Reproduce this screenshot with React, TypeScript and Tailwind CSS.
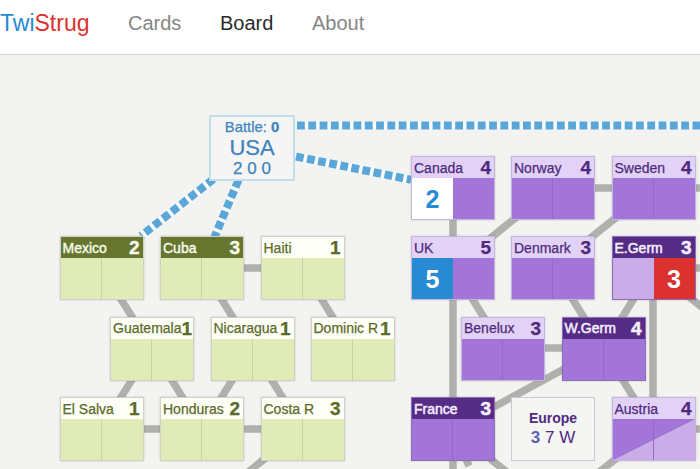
import React from "react";

type Theme = "camBattle" | "cam" | "eurBattle" | "eur";

interface Country {
  name: string;
  stability: number;
  x: number;
  y: number;
  theme: Theme;
  us?: number;
  usControl?: boolean;
  ussr?: number;
  cells?: "east" | "split";
}

const countries: Country[] = [
  { name: "Mexico", stability: 2, x: 59.5, y: 236, theme: "camBattle" },
  { name: "Cuba", stability: 3, x: 160, y: 236, theme: "camBattle" },
  { name: "Haiti", stability: 1, x: 260.5, y: 236, theme: "cam" },
  { name: "Guatemala", stability: 1, x: 110, y: 316.5, theme: "cam" },
  { name: "Nicaragua", stability: 1, x: 210.5, y: 316.5, theme: "cam" },
  { name: "Dominic R", stability: 1, x: 310.5, y: 316.5, theme: "cam" },
  { name: "El Salva", stability: 1, x: 59.5, y: 397, theme: "cam" },
  { name: "Honduras", stability: 2, x: 160, y: 397, theme: "cam" },
  { name: "Costa R", stability: 3, x: 260.5, y: 397, theme: "cam" },
  { name: "Canada", stability: 4, x: 411, y: 156, theme: "eur", us: 2 },
  { name: "Norway", stability: 4, x: 511, y: 156, theme: "eur" },
  { name: "Sweden", stability: 4, x: 611.5, y: 156, theme: "eur" },
  { name: "UK", stability: 5, x: 411, y: 236, theme: "eur", us: 5, usControl: true },
  { name: "Denmark", stability: 3, x: 511, y: 236, theme: "eur" },
  { name: "E.Germ", stability: 3, x: 611.5, y: 236, theme: "eurBattle", ussr: 3, cells: "east" },
  { name: "Benelux", stability: 3, x: 461, y: 316.5, theme: "eur" },
  { name: "W.Germ", stability: 4, x: 561.5, y: 316.5, theme: "eurBattle" },
  { name: "France", stability: 3, x: 411, y: 397, theme: "eurBattle" },
  { name: "Austria", stability: 4, x: 611.5, y: 397, theme: "eur", cells: "split" },
];

const header: Record<Theme, string> = {
  camBattle: "bg-[#67762f] text-[#f8faec] [-webkit-text-stroke:0.4px]",
  cam: "bg-[#fdfef5] text-[#5c6b2b] [-webkit-text-stroke:0.25px]",
  eurBattle: "bg-[#552d87] text-[#f5effc] [-webkit-text-stroke:0.5px]",
  eur: "bg-[#e2d3f6] text-[#4e2a80] [-webkit-text-stroke:0.25px]",
};

const links: [number, number, number, number][] = [
  [101, 268, 152, 348],
  [202, 268, 252, 348],
  [202, 268, 302, 268],
  [302, 268, 352, 348],
  [152, 348, 101, 429],
  [152, 348, 202, 429],
  [252, 348, 202, 429],
  [252, 348, 302, 429],
  [101, 429, 302, 429],
  [302, 429, 222, 493],
  [453, 188, 453, 480],
  [453, 429, 469, 466],
  [453, 429, 553, 509],
  [553, 188, 453, 268],
  [553, 188, 720, 188],
  [653, 188, 553, 268],
  [453, 268, 503, 348],
  [503, 348, 603, 348],
  [553, 268, 603, 348],
  [653, 268, 603, 348],
  [653, 268, 653, 429],
  [653, 268, 720, 268],
  [653, 268, 753, 348],
  [603, 348, 453, 429],
  [603, 348, 653, 429],
  [653, 429, 573, 493],
  [653, 429, 720, 429],
];

const usaLinks: [number, number, number, number][] = [
  [213.5, 179, 141, 236],
  [238.5, 180, 214.5, 237],
  [296, 156.5, 411, 179.8],
  [297, 125.5, 702, 125.5],
];

function CountryCard({ c }: { c: Country }) {
  const cam = c.theme === "cam" || c.theme === "camBattle";
  const base = cam ? "bg-[#e1ebb7]" : "bg-[#a375d8]";
  const divider = cam ? "border-[#c8d1a0]" : "border-[#9669c9]";
  let left = base + " border-r " + divider;
  let right = base;
  if (c.us !== undefined) left = c.usControl ? "bg-[#268bd2] text-white" : "bg-white text-[#268bd2]";
  if (c.cells === "east") left = "bg-[#caace8]";
  if (c.ussr !== undefined) right = "bg-[#dc322f] text-white";
  if (c.cells === "split") {
    left = "border-r " + divider;
    right = "";
  }
  return (
    <div
      className={
        "absolute flex h-[64px] w-[84px] flex-col border shadow-[0_0_2px_rgba(0,0,0,0.18)] " +
        (cam ? "border-[#cfd2c2]" : c.theme === "eurBattle" ? "border-[#8e6cb8]" : "border-[#c6b5de]")
      }
      style={{ left: c.x, top: c.y }}
    >
      <div className={"flex h-[21px] shrink-0 items-center justify-between pr-[3px] pl-[2px] " + header[c.theme]}>
        <span className="pt-px text-[14px] leading-[21px] whitespace-nowrap">{c.name}</span>
        <span className="text-[19px] leading-[21px] font-bold">{c.stability}</span>
      </div>
      <div
        className={
          "flex flex-1 text-[25px] leading-[40px] font-bold " +
          (c.cells === "split" ? "bg-[linear-gradient(to_bottom_right,#a375d8_50%,#caace8_50.5%)]" : "")
        }
      >
        <div className={"flex w-[41px] items-center justify-center " + left}>{c.us}</div>
        <div className={"flex flex-1 items-center justify-center " + right}>{c.ussr}</div>
      </div>
    </div>
  );
}

export default function App() {
  return (
    <div className="flex h-[469px] w-[700px] flex-col overflow-hidden bg-[#f3f3f1] font-['Liberation_Sans',Arial,sans-serif]">
      <nav className="flex h-[55px] shrink-0 border-b border-[#cfcfcf] bg-white pt-[9px] text-[20px] leading-[28px]">
        <a className="w-32 text-[23px]">
          <span className="text-[#268bd2]">Twi</span>
          <span className="text-[#dc322f]">Strug</span>
        </a>
        <a className="w-[92px] text-[#858585]">Cards</a>
        <a className="w-[92px] text-[#2b2b2b]">Board</a>
        <a className="text-[#858585]">About</a>
      </nav>
      <main className="relative flex-1">
        <div className="absolute -top-[55px] left-0 h-[469px] w-[700px]">
          <svg className="absolute inset-0" width="700" height="469" viewBox="0 0 700 469">
            {links.map(([x1, y1, x2, y2], i) => (
              <line key={i} x1={x1} y1={y1} x2={x2} y2={y2} stroke="#b0b0ae" strokeWidth="7.5" />
            ))}
            {usaLinks.map(([x1, y1, x2, y2], i) => (
              <g key={i} strokeWidth="8">
                <line x1={x1} y1={y1} x2={x2} y2={y2} stroke="#fafbfb" />
                <line x1={x1} y1={y1} x2={x2} y2={y2} stroke="#5ba6d9" strokeDasharray="7.8 3.5" />
              </g>
            ))}
          </svg>
          <div className="absolute top-[115px] left-[209px] flex h-[66px] w-[86px] flex-col items-center border-2 border-[#c5dce9] bg-[#f4f5f4] pt-[2px] text-[#3d83bc]">
            <div className="text-[14.8px] leading-[17px] whitespace-nowrap [-webkit-text-stroke:0.25px]">
              Battle: <b>0</b>
            </div>
            <div className="text-[22px] leading-[23px] [-webkit-text-stroke:0.25px]">USA</div>
            <div className="text-[17px] leading-[19px] [-webkit-text-stroke:0.25px]">2 0 0</div>
          </div>
          {countries.map((c) => (
            <CountryCard key={c.name} c={c} />
          ))}
          <div className="absolute top-[397px] left-[511px] flex h-[64px] w-[84px] flex-col items-center border border-[#c9c9ce] bg-[#f5f5f4] pt-[11px] text-[#4e2a80]">
            <div className="text-[14px] leading-[18px] font-bold">Europe</div>
            <div className="text-[17px] leading-[22px]">
              <b className="text-[#5b62b8]">3</b> 7 W
            </div>
          </div>
        </div>
      </main>
    </div>
  );
}
